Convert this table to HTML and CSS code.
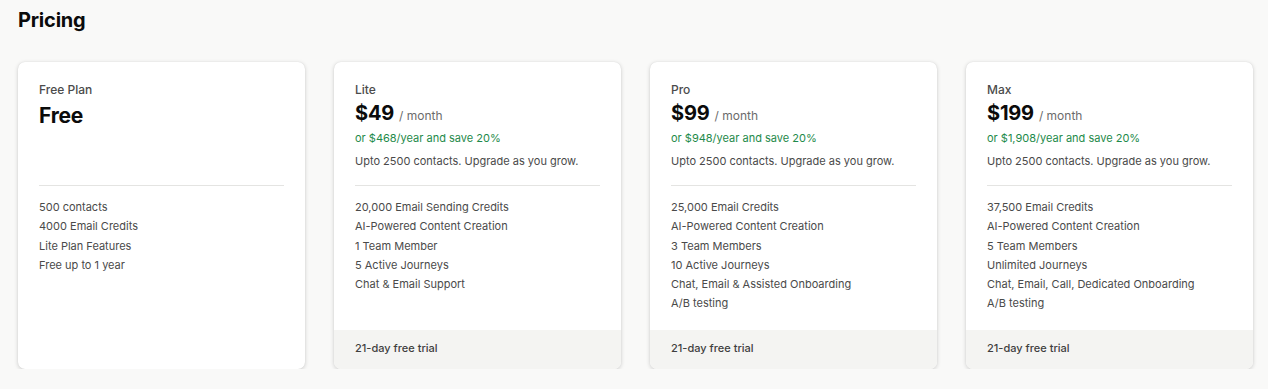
FILE: index.html
```html
<!DOCTYPE html>
<html lang="en">
<head>
<meta charset="utf-8">
<title>Pricing</title>
<link rel="stylesheet" href="styles.css">
</head>
<body>
<main class="page">
  <h1 class="title">Pricing</h1>
  <div class="plans">
    <section class="card">
      <div class="card-body">
        <div class="plan-name">Free Plan</div>
        <div class="price price-free"><span class="amount amount-free">Free</span></div>
        <div class="divider free-divider"></div>
        <ul class="features">
          <li>500 contacts</li>
          <li>4000 Email Credits</li>
          <li>Lite Plan Features</li>
          <li>Free up to 1 year</li>
        </ul>
      </div>
    </section>
    <section class="card">
      <div class="card-body">
        <div class="plan-name">Lite</div>
        <div class="price"><span class="amount">$49</span><span class="period">/ month</span></div>
        <div class="yearly">or $468/year and save 20%</div>
        <div class="desc">Upto 2500 contacts. Upgrade as you grow.</div>
        <div class="divider"></div>
        <ul class="features">
          <li>20,000 Email Sending Credits</li>
          <li>AI-Powered Content Creation</li>
          <li>1 Team Member</li>
          <li>5 Active Journeys</li>
          <li>Chat &amp; Email Support</li>
        </ul>
      </div>
      <div class="card-foot">21-day free trial</div>
    </section>
    <section class="card">
      <div class="card-body">
        <div class="plan-name">Pro</div>
        <div class="price"><span class="amount">$99</span><span class="period">/ month</span></div>
        <div class="yearly">or $948/year and save 20%</div>
        <div class="desc">Upto 2500 contacts. Upgrade as you grow.</div>
        <div class="divider"></div>
        <ul class="features">
          <li>25,000 Email Credits</li>
          <li>AI-Powered Content Creation</li>
          <li>3 Team Members</li>
          <li>10 Active Journeys</li>
          <li>Chat, Email &amp; Assisted Onboarding</li>
          <li>A/B testing</li>
        </ul>
      </div>
      <div class="card-foot">21-day free trial</div>
    </section>
    <section class="card">
      <div class="card-body">
        <div class="plan-name">Max</div>
        <div class="price"><span class="amount">$199</span><span class="period">/ month</span></div>
        <div class="yearly">or $1,908/year and save 20%</div>
        <div class="desc">Upto 2500 contacts. Upgrade as you grow.</div>
        <div class="divider"></div>
        <ul class="features">
          <li>37,500 Email Credits</li>
          <li>AI-Powered Content Creation</li>
          <li>5 Team Members</li>
          <li>Unlimited Journeys</li>
          <li>Chat, Email, Call, Dedicated Onboarding</li>
          <li>A/B testing</li>
        </ul>
      </div>
      <div class="card-foot">21-day free trial</div>
    </section>
  </div>
</main>
</body>
</html>
```

FILE: styles.css
```css
* { box-sizing: border-box; }
html, body { margin: 0; padding: 0; }
body {
  background: #f9f9f8;
  font-family: Inter, "Noto Sans", sans-serif;
  color: #4a4a4a;
}
.page {
  padding: 8px 15px 0 18px;
}
.title {
  margin: 0;
  font-size: 20px;
  line-height: 24px;
  font-weight: 700;
  color: #0b0b0b;
  letter-spacing: -0.2px;
}
.plans {
  margin-top: 30px;
  display: grid;
  grid-template-columns: repeat(4, 287px);
  column-gap: 29px;
  align-items: stretch;
}
.card {
  height: 307px;
  background: #fff;
  border-radius: 7px;
  box-shadow: 0 1px 4px rgba(0,0,0,0.18), 0 0 1px rgba(0,0,0,0.1);
  display: flex;
  flex-direction: column;
  overflow: hidden;
}
.card-body {
  flex: 1;
  padding: 20px 21px 0 21px;
}
.plan-name {
  font-size: 12px;
  line-height: 16px;
  color: #4b4b4b;
  font-weight: 500;
}
.price {
  margin-top: 2px;
  display: flex;
  align-items: baseline;
  height: 26px;
}
.price-free {
  margin-top: 5px;
}
.amount {
  font-size: 20px;
  line-height: 26px;
  font-weight: 700;
  color: #0b0b0b;
  letter-spacing: -0.2px;
}
.amount-free {
  font-size: 21px;
}
.period {
  margin-left: 5px;
  font-size: 12px;
  color: #6b6b6b;
}
.yearly {
  margin-top: 5px;
  font-size: 11px;
  line-height: 14px;
  color: #1e8a4a;
}
.desc {
  margin-top: 9px;
  font-size: 11px;
  line-height: 14px;
  color: #4a4a4a;
}
.divider {
  margin-top: 17px;
  height: 1px;
  background: #e4e4e2;
}
.free-divider {
  margin-top: 56px;
}
.features {
  list-style: none;
  margin: 12px 0 0 0;
  padding: 0;
}
.features li {
  font-size: 11px;
  line-height: 19.3px;
  color: #4a4a4a;
}
.card-foot {
  height: 39px;
  background: #f4f4f2;
  padding: 11px 21px 0 21px;
  font-size: 11px;
  line-height: 14px;
  font-weight: 500;
  color: #3f3f3f;
}
```
